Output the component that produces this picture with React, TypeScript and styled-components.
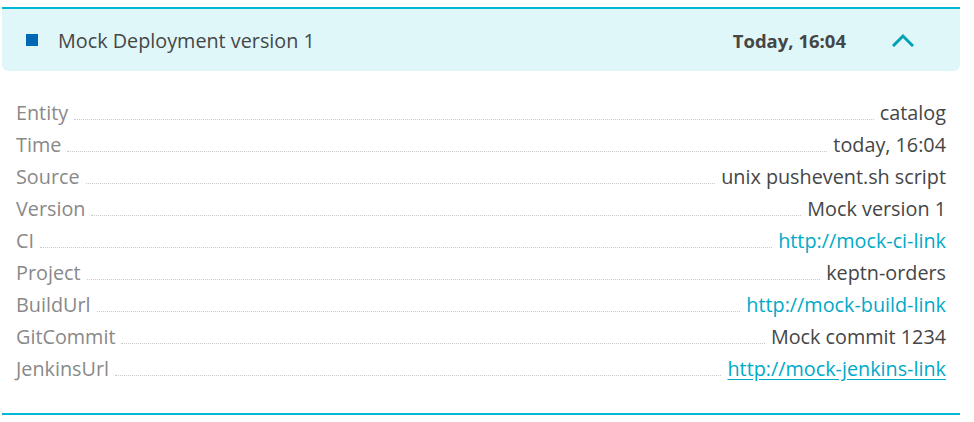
import React from "react";
import styled, { createGlobalStyle } from "styled-components";

const Global = createGlobalStyle`
  html, body { margin: 0; padding: 0; background: #ffffff; }
  body { font-family: "Open Sans", "Noto Sans", sans-serif; }
`;

const Card = styled.section`
  margin: 7px 14px 0 2px;
  width: 958px;
  border-bottom: 2px solid #00b8d4;
`;

const Header = styled.header`
  display: flex;
  align-items: center;
  height: 62px;
  border-top: 2px solid #00b8d4;
  background: #e0f7fa;
  border-radius: 0 0 6px 6px;
  padding: 0 46px 0 24px;
  color: #454646;
`;

const Marker = styled.span`
  width: 12px;
  height: 12px;
  background: #0068b5;
  flex: none;
  margin-right: 20px;
`;

const Title = styled.h2`
  flex: 1;
  margin: 0;
  font-size: 19.8px;
  font-weight: 400;
  letter-spacing: 0;
`;

const Stamp = styled.span`
  font-size: 18.5px;
  font-weight: 700;
  margin-right: 46px;
`;

const Chevron = styled.button`
  border: 0;
  background: none;
  padding: 0;
  width: 22px;
  height: 14px;
  display: flex;
  color: #00a1b2;
  cursor: pointer;
`;

const Body = styled.dl`
  margin: 0;
  padding: 26px 14px 28px 14px;
`;

const Row = styled.div`
  display: flex;
  align-items: baseline;
  height: 32px;
  line-height: 32px;
  font-size: 19.8px;
`;

const Label = styled.dt`
  color: #898989;
  flex: none;
`;

const Leader = styled.span`
  flex: 1;
  margin: 0 6px;
  border-bottom: 1px dotted #c8c8c8;
  align-self: baseline;
  height: 0;
`;

const Value = styled.dd<{ $link?: boolean; $underline?: boolean }>`
  margin: 0;
  flex: none;
  color: ${(p) => (p.$link ? "#00a9c8" : "#454646")};
  a {
    color: inherit;
    text-decoration: ${(p) => (p.$underline ? "underline" : "none")};
    text-underline-offset: 3px;
  }
`;

type Item = { label: string; value: string; link?: boolean; underline?: boolean };

const items: Item[] = [
  { label: "Entity", value: "catalog" },
  { label: "Time", value: "today, 16:04" },
  { label: "Source", value: "unix pushevent.sh script" },
  { label: "Version", value: "Mock version 1" },
  { label: "CI", value: "http://mock-ci-link", link: true },
  { label: "Project", value: "keptn-orders" },
  { label: "BuildUrl", value: "http://mock-build-link", link: true },
  { label: "GitCommit", value: "Mock commit 1234" },
  { label: "JenkinsUrl", value: "http://mock-jenkins-link", link: true, underline: true },
];

export default function App() {
  return (
    <>
      <Global />
      <Card>
        <Header>
          <Marker />
          <Title>Mock Deployment version 1</Title>
          <Stamp>Today, 16:04</Stamp>
          <Chevron aria-label="Collapse">
            <svg width="22" height="14" viewBox="0 0 22 14" fill="none">
              <path d="M2 12 L11 3 L20 12" stroke="currentColor" strokeWidth="3" strokeLinecap="square" />
            </svg>
          </Chevron>
        </Header>
        <Body>
          {items.map((it) => (
            <Row key={it.label}>
              <Label>{it.label}</Label>
              <Leader />
              <Value $link={it.link} $underline={it.underline}>
                {it.link ? <a href="#">{it.value}</a> : it.value}
              </Value>
            </Row>
          ))}
        </Body>
      </Card>
    </>
  );
}
